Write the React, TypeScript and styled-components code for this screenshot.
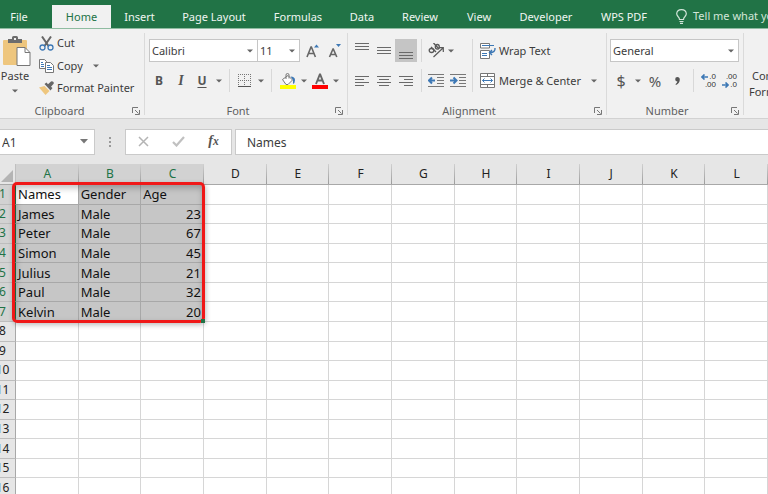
import React from 'react';
import styled, { createGlobalStyle } from 'styled-components';

const GlobalStyle = createGlobalStyle`
  * { box-sizing: border-box; }
  body {
    margin: 0;
    background: #fff;
    color: #3c3c3c;
    font: 11px/16px "Noto Sans", "Open Sans", sans-serif;
  }
  button, input, select { font: inherit; color: inherit; margin: 0; padding: 0; }
`;

const Page = styled.div`
  display: flex;
  flex-direction: column;
  height: 100vh;
  overflow: hidden;
`;

/* ---------- tab strip ---------- */

const TabStrip = styled.nav`
  display: flex;
  align-items: flex-end;
  flex: none;
  height: 29px;
  background: #217346;
  border-bottom: 1px solid #8fbca1;
  overflow: hidden;
`;

const Tab = styled.button<{ $width: number; $active?: boolean }>`
  flex: none;
  width: ${(p) => p.$width}px;
  height: 23px;
  border: 0;
  white-space: nowrap;
  background: ${(p) => (p.$active ? '#f1f1f1' : 'transparent')};
  color: ${(p) => (p.$active ? '#217346' : '#f0f6f2')};
`;

const FileTab = styled(Tab)`
  && { padding-right: 14px; }
`;

const TellMe = styled.button`
  display: flex;
  align-items: center;
  gap: 6px;
  flex: none;
  height: 24px;
  && { margin-left: 14px; }
  border: 0;
  background: transparent;
  && { color: #d3e6da; }
  white-space: nowrap;
`;

/* ---------- ribbon ---------- */

const Ribbon = styled.div`
  display: flex;
  flex: none;
  height: 90px;
  background: #f1f1f1;
  border-bottom: 1px solid #d2d2d2;
  overflow: hidden;
`;

const Group = styled.section<{ $width: number }>`
  display: flex;
  flex-direction: column;
  flex: none;
  width: ${(p) => p.$width}px;
  padding-top: 10px;
  background: linear-gradient(#dadada, #dadada) right 4px / 1px 82px no-repeat;
`;

const GroupFooter = styled.div<{ $shift?: number }>`
  display: flex;
  align-items: center;
  margin-top: auto;
  height: 15px;
  padding-right: 5px;
  color: #5f5f5f;
  & > span {
    flex: 1;
    text-align: center;
    padding-right: ${(p) => p.$shift ?? 0}px;
  }
`;

const Launcher = styled.button`
  display: flex;
  width: 8px;
  height: 8px;
  && { margin-left: 4px; }
  border: 0;
  background: transparent;
`;

const Row = styled.div<{ $indent?: number }>`
  display: flex;
  align-items: center;
  height: 23px;
  padding-left: ${(p) => p.$indent ?? 3}px;
  & + & { margin-top: 7px; }
`;

const Tool = styled.button<{ $width?: number; $height?: number; $on?: boolean; $size?: number }>`
  display: flex;
  align-items: center;
  justify-content: center;
  flex: none;
  width: ${(p) => p.$width ?? 22}px;
  height: ${(p) => p.$height ?? 23}px;
  border: 0;
  background: ${(p) => (p.$on ? '#c5c5c5' : 'transparent')};
  && {
    color: #555;
    font-size: ${(p) => p.$size ?? 12}px;
  }
`;

const BoldTool = styled(Tool)`&& { font-weight: 700; }`;
const ItalicTool = styled(Tool)`
  && {
    font-family: "Liberation Serif", serif;
    font-style: italic;
    font-weight: 700;
  }
`;
const UnderlineTool = styled(Tool)`
  && { font-weight: 700; }
  text-decoration: underline;
  text-underline-offset: 2px;
`;

const Divider = styled.span<{ $width: number; $tall?: boolean }>`
  flex: none;
  align-self: flex-start;
  width: ${(p) => p.$width}px;
  height: ${(p) => (p.$tall ? 30 : 23)}px;
  background: linear-gradient(#d8d8d8, #d8d8d8) center / 1px 100% no-repeat;
`;

const Space = styled.span<{ $width: number }>`
  flex: none;
  width: ${(p) => p.$width}px;
`;

const LabelTool = styled.button<{ $gap?: number }>`
  display: flex;
  align-items: center;
  gap: ${(p) => p.$gap ?? 3}px;
  flex: none;
  height: 22px;
  border: 0;
  background: transparent;
  white-space: nowrap;
`;

const SelectBox = styled.label<{ $width: number }>`
  display: grid;
  grid-template-columns: 1fr 14px;
  align-items: center;
  flex: none;
  width: ${(p) => p.$width}px;
  height: 23px;
  background: #fff;
  border: 1px solid #c6c6c6;
  & + & { border-left: 0; }
  select {
    grid-area: 1 / 1 / 2 / 3;
    appearance: none;
    border: 0;
    outline: 0;
    width: 100%;
    height: 20px;
    padding-left: 2px;
    background: transparent;
  }
  svg { grid-area: 1 / 2; justify-self: center; pointer-events: none; }
`;

const ClipboardBody = styled.div`
  display: flex;
  margin-top: -7px;
`;

const PasteColumn = styled.div`
  display: flex;
  flex-direction: column;
  align-items: center;
  width: 39px;
  padding-right: 9px;
`;

const PasteButton = styled.button`
  display: flex;
  flex-direction: column;
  align-items: center;
  border: 0;
  background: transparent;
  svg { margin: 4px 0 0 3px; }
  span { margin-top: 1px; }
`;

const ClipboardList = styled.div`
  display: flex;
  flex-direction: column;
`;

const CopyLine = styled.div`
  display: flex;
  align-items: center;
`;

const StylesGroup = styled.section`
  flex: none;
  padding: 39px 0 0 5px;
`;

const StylesButton = styled.button`
  width: 68px;
  border: 0;
  background: transparent;
  line-height: 16px;
  text-align: left;
  text-indent: 3px;
`;

/* ---------- formula bar ---------- */

const FormulaBar = styled.div`
  display: flex;
  flex: none;
  align-items: center;
  height: 45px;
  background: #e6e6e6;
  font-size: 12px;
`;

const NameBox = styled.div`
  display: flex;
  align-items: center;
  flex: none;
  width: 95px;
  height: 26px;
  background: #fff;
  border: 1px solid #cacaca;
  border-left: 0;
  input {
    width: 77px;
    height: 24px;
    border: 0;
    outline: 0;
    padding: 2px 0 0 2px;
    background: transparent;
  }
`;

const Dots = styled.span`
  flex: none;
  width: 30px;
  height: 12px;
  background: radial-gradient(#999 1px, transparent 1px) center top / 4px 4px repeat-y;
`;

const EntryTools = styled.div`
  display: flex;
  align-items: center;
  justify-content: space-around;
  flex: none;
  width: 107px;
  height: 26px;
  background: #fff;
  border: 1px solid #cacaca;
`;

const FormulaInput = styled.input`
  flex: 1;
  min-width: 0;
  height: 26px;
  && { margin-left: 3px; padding: 2px 0 0 11px; }
  border: 1px solid #cacaca;
  border-right: 0;
  outline: 0;
  background: #fff;
`;

/* ---------- worksheet ---------- */

const Sheet = styled.main`
  position: relative;
  flex: 1;
  min-height: 0;
  margin-left: -10px;
  overflow: hidden;
`;

const Grid = styled.table`
  width: 100%;
  height: 334px;
  table-layout: fixed;
  border-collapse: separate;
  border-spacing: 0;
  color: #111;
  font-size: 13px;
  line-height: 16px;
  th, td { padding: 0; font-weight: 400; }
`;

const Corner = styled.th`
  width: 26px;
  height: 21px;
  background: #e6e6e6;
  border-right: 1px solid #c0c0c0;
  border-bottom: 1px solid #a8a8a8;
  svg { display: block; margin: 3px 2px 0 auto; }
`;

const ColumnHead = styled.th<{ $selected: boolean }>`
  height: 21px;
  font-size: 12px;
  border-bottom: 1px solid ${(p) => (p.$selected ? '#217346' : '#a8a8a8')};
  background:
    linear-gradient(#d0d0d0, #9c9c9c) right / 1px 100% no-repeat,
    ${(p) => (p.$selected ? '#d2d2d2' : '#e6e6e6')};
  color: ${(p) => (p.$selected ? '#217346' : '#222')};
`;

const RowHead = styled.th<{ $selected: boolean }>`
  font-size: 12px;
  border-right: 1px solid ${(p) => (p.$selected ? '#217346' : '#a8a8a8')};
  border-bottom: 1px solid #bdbdbd;
  background: ${(p) => (p.$selected ? '#d2d2d2' : '#e6e6e6')};
  color: ${(p) => (p.$selected ? '#217346' : '#222')};
`;

const Cell = styled.td<{ $selected: boolean; $active: boolean; $number: boolean }>`
  && { padding: 0 2px; }
  text-align: ${(p) => (p.$number ? 'right' : 'left')};
  border-right: 1px solid ${(p) => (p.$selected ? '#a8a8a8' : '#d6d6d6')};
  border-bottom: 1px solid ${(p) => (p.$selected ? '#a8a8a8' : '#d6d6d6')};
  background: ${(p) => (p.$selected && !p.$active ? '#c6c6c6' : '#fff')};
`;

const Highlight = styled.div`
  position: absolute;
  left: 22px;
  top: 18px;
  width: calc((100% - 26px) / 4 + 5px);
  height: 141px;
  border: 3px solid #f01818;
  border-radius: 5px;
  box-shadow: 1px 2px 5px rgba(0, 0, 0, 0.25), inset 1px 3px 6px rgba(0, 0, 0, 0.25);
  pointer-events: none;
  &::after {
    content: '';
    position: absolute;
    right: -3px;
    bottom: -3px;
    width: 4px;
    height: 4px;
    background: #217346;
  }
`;

/* ---------- icons ---------- */

const Caret = () => (
  <svg width="6" height="4" viewBox="0 0 6 4"><path d="M0 .5h6L3 3.5z" fill="#666" /></svg>
);

const LauncherIcon = () => (
  <svg width="8" height="8" viewBox="0 0 8 8" fill="none" stroke="#777">
    <path d="M.5 6V.5H6M3 3l3.500 3.500M7.500 3v4.500H3" />
  </svg>
);

const PasteIcon = () => (
  <svg width="28" height="31" viewBox="0 0 28 31">
    <rect x="0" y="4" width="24" height="25" rx="1" fill="#eec67e" />
    <path d="M5 7V3h4V1.500q0-1.500 1.500-1.500h3Q15 0 15 1.500V3h4v4z" fill="#6d6d6d" />
    <rect x="11" y="2" width="2" height="2" fill="#f1f1f1" />
    <path d="M14 11.500h8l5 5v13H14z" fill="#fff" stroke="#777" />
    <path d="M22 11.500v5h5" fill="none" stroke="#777" />
  </svg>
);

const CutIcon = () => (
  <svg width="15" height="15" viewBox="0 0 15 15" fill="none">
    <path d="M3 .5L9.500 10M12 .5L5.500 10" stroke="#666" strokeWidth="2" />
    <circle cx="3.500" cy="11.500" r="2.500" stroke="#3d78b5" strokeWidth="1.300" />
    <circle cx="11.500" cy="11.500" r="2.500" stroke="#3d78b5" strokeWidth="1.300" />
  </svg>
);

const CopyIcon = () => (
  <svg width="15" height="14" viewBox="0 0 15 14" stroke="#777" fill="#fff">
    <path d="M.5.5h5l2 2v7h-7z" />
    <path d="M2 3.500h2M2 5.500h3M2 7.500h3" stroke="#3d78b5" />
    <path d="M6.500 3.500h5l3 3v7h-8z" />
    <path d="M8 6.500h3M8 8.500h5M8 10.500h5" stroke="#3d78b5" />
  </svg>
);

const BrushIcon = () => (
  <svg width="15" height="14" viewBox="0 0 15 14">
    <path d="M0 6.500L5.500 5l5 5-4 4z" fill="#eec67e" />
    <path d="M5.500 3l2-1.500L9 3.200 12 .6q1-1 2.200.2t.2 2.200L12 5.700 13.500 7l-2 2.500z" fill="#666" />
  </svg>
);

const GrowIcon = ({ down = false }: { down?: boolean }) => (
  <svg width="14" height="16" viewBox="0 0 14 16" fill="none">
    {down ? (
      <path d="M1.500 14L5 6h.3l3.500 8M3 11.500h4.500" stroke="#666" strokeWidth="1.600" />
    ) : (
      <path d="M1 14L5 4h.4L9.400 14M2.500 10.500h5.500" stroke="#666" strokeWidth="1.600" />
    )}
    <path d={down ? 'M8 1h5l-2.500 3z' : 'M8 4.500h5L10.500 1.500z'} fill="#3d78b5" />
  </svg>
);

const BorderIcon = () => (
  <svg width="13" height="13" viewBox="0 0 13 13" stroke="#777" fill="none">
    <path d="M0 .5h13M.5 0v12M6.500 0v12M12.500 0v12M0 6.500h13" strokeDasharray="1 1" />
    <path d="M0 12.500h13" stroke="#555" />
  </svg>
);

const FillIcon = () => (
  <svg width="16" height="16" viewBox="0 0 16 16">
    <path d="M2.500 6.500L8 2.500l4.500 4.500L8 11.500H6z" fill="#fff" stroke="#777" />
    <path d="M6 6V2Q6 .5 7.500.5T9 2v3.500" fill="none" stroke="#777" />
    <path d="M10.500 3.500q4.500 0 4.500 3.500 0 3-2 4V7z" fill="#3d78b5" />
    <rect y="12" width="16" height="4" fill="#ffff00" />
  </svg>
);

const FontColorIcon = () => (
  <svg width="16" height="16" viewBox="0 0 16 16" fill="none">
    <path d="M4 11L7.800 1.500h.4L12 11M5.300 7.500h5.400" stroke="#666" strokeWidth="1.900" />
    <rect y="12" width="16" height="4" fill="#ff0000" />
  </svg>
);

const LinesIcon = ({ lines, y, step = 3 }: { lines: number[][]; y: number; step?: number }) => (
  <svg width="14" height="20" viewBox="0 0 14 20" stroke="#6a6a6a">
    {lines.map(([from, to], i) => (
      <path key={i} d={`M${from} ${y + i * step + 0.5}H${to}`} />
    ))}
  </svg>
);

const OrientationIcon = () => (
  <svg width="16" height="15" viewBox="0 0 16 15" fill="none" stroke="#5a5a5a">
    <ellipse cx="3.500" cy="7.500" rx="2.300" ry="2" strokeWidth="1.300" />
    <path d="M3 4l5 5M5.500 0l5.500 6" strokeWidth="1.400" />
    <ellipse cx="9.300" cy="3.800" rx="2" ry="2.300" strokeWidth="1.300" />
    <path d="M5.500 14L15 5M15.300 9V4.700H11" strokeWidth="1.200" />
  </svg>
);

const IndentIcon = ({ right = false }: { right?: boolean }) => (
  <svg width="16" height="13" viewBox="0 0 16 13" stroke="#777" fill="none">
    <path d="M0 .5h16M9 3.500h7M9 6.500h7M9 9.500h7M0 12.500h16" />
    <path
      d={right ? 'M0 6.500h6.500M3.500 3.500l3 3-3 3' : 'M7 6.500H1M4 3.500l-3 3 3 3'}
      stroke="#3d78b5"
      strokeWidth="2"
    />
  </svg>
);

const WrapIcon = () => (
  <svg width="16" height="16" viewBox="0 0 16 16" fill="none" stroke="#777">
    <path d="M.5 5V.5h9V5z M.5 15.500v-8h9v8z" fill="#fff" />
    <path d="M2 2.500h12M2 10.500h5M2 12.500h5" stroke="#3d78b5" />
    <path d="M15 5q.5 4.500-5 4.500M12 7L9.500 9.500 12 12" stroke="#3d78b5" strokeWidth="1.400" />
  </svg>
);

const MergeIcon = () => (
  <svg width="15" height="15" viewBox="0 0 15 15" fill="none" stroke="#777">
    <path d="M.5.5h14v14H.5zM.5 3.500h14M.5 11.500h14M7.500 0v3.500M7.500 11.500V15" fill="#fff" />
    <path d="M2.500 7.500h10M4.500 5.500l-2 2 2 2M10.500 5.500l2 2-2 2" stroke="#3d78b5" />
  </svg>
);

const BulbIcon = () => (
  <svg width="11" height="15" viewBox="0 0 11 15" fill="none" stroke="#d3e6da">
    <path d="M3.500 10.500q0-1.500-1.500-3Q.7 6 .7 4.800.9.7 5.500.7t4.800 4.100q0 1.200-1.300 2.700-1.500 1.500-1.500 3zM3.500 12.500h4M4 14.300h3" strokeWidth="1.200" />
  </svg>
);

const CommaIcon = () => (
  <svg width="5" height="8" viewBox="0 0 5 8">
    <path d="M2.300 0Q4.800 0 4.800 2.500 4.800 6 1 8l-.5-.8Q2.300 6 2.400 4.600.2 4.500.2 2.300.2 0 2.300 0z" fill="#555" />
  </svg>
);

const DecimalStack = styled.span`
  display: flex;
  flex-direction: column;
  width: 16px;
  color: #333;
  font: 8px/8px "Liberation Sans", sans-serif;
  span { display: flex; align-items: center; justify-content: flex-end; gap: 1px; }
`;

const SmallArrow = ({ right = false }: { right?: boolean }) => (
  <svg width="7" height="6" viewBox="0 0 7 6" fill="none" stroke="#3d78b5" strokeWidth="1.600">
    <path d={right ? 'M0 3h6M3.500.5L6 3 3.500 5.500' : 'M7 3H1M3.500.5L1 3l2.500 2.500'} />
  </svg>
);

/* ---------- data ---------- */

const tabs: [string, number, boolean?][] = [
  ['Home', 59, true],
  ['Insert', 57],
  ['Page Layout', 92],
  ['Formulas', 76],
  ['Data', 52],
  ['Review', 64],
  ['View', 54],
  ['Developer', 80],
  ['WPS PDF', 76],
];

const columns = 'ABCDEFGHIJKL'.split('');

const people: string[][] = [
  ['Names', 'Gender', 'Age'],
  ['James', 'Male', '23'],
  ['Peter', 'Male', '67'],
  ['Simon', 'Male', '45'],
  ['Julius', 'Male', '21'],
  ['Paul', 'Male', '32'],
  ['Kelvin', 'Male', '20'],
];

const rowNumbers = Array.from({ length: 16 }, (_, i) => i + 1);

const left = [[0, 14], [0, 9], [0, 14], [0, 9]];
const center = [[0, 14], [2, 12], [0, 14], [2, 12]];
const right = [[0, 14], [5, 14], [0, 14], [5, 14]];
const full = [[0, 14], [0, 14], [0, 14]];

const Select = ({ label, value, width }: { label: string; value: string; width: number }) => (
  <SelectBox $width={width}>
    <select aria-label={label} defaultValue={value}>
      <option>{value}</option>
    </select>
    <Caret />
  </SelectBox>
);

const Footer = ({ title, shift }: { title: string; shift?: number }) => (
  <GroupFooter $shift={shift}>
    <span>{title}</span>
    <Launcher aria-label={`${title} settings`}><LauncherIcon /></Launcher>
  </GroupFooter>
);

const Drop = ({ label, width = 8, height }: { label: string; width?: number; height?: number }) => (
  <Tool $width={width} $height={height} aria-label={label}><Caret /></Tool>
);

export default function App() {
  return (
    <Page>
      <GlobalStyle />
      <TabStrip>
        <FileTab $width={52}>File</FileTab>
        {tabs.map(([name, width, active]) => (
          <Tab key={name} $width={width} $active={active}>{name}</Tab>
        ))}
        <TellMe><BulbIcon />Tell me what you want to do</TellMe>
      </TabStrip>

      <Ribbon>
        <Group $width={145}>
          <ClipboardBody>
            <PasteColumn>
              <PasteButton><PasteIcon /><span>Paste</span></PasteButton>
              <Drop label="Paste options" width={14} height={14} />
            </PasteColumn>
            <ClipboardList>
              <LabelTool><CutIcon />Cut</LabelTool>
              <CopyLine>
                <LabelTool><CopyIcon />Copy</LabelTool>
                <Space $width={9} />
                <Drop label="Copy options" />
              </CopyLine>
              <LabelTool><BrushIcon />Format Painter</LabelTool>
            </ClipboardList>
          </ClipboardBody>
          <Footer title="Clipboard" shift={9} />
        </Group>

        <Group $width={203}>
          <Row $indent={4}>
            <Select label="Font" value="Calibri" width={109} />
            <Select label="Font size" value="11" width={42} />
            <Space $width={2} />
            <Tool aria-label="Increase font size"><GrowIcon /></Tool>
            <Tool aria-label="Decrease font size"><GrowIcon down /></Tool>
          </Row>
          <Row>
            <BoldTool>B</BoldTool>
            <ItalicTool $size={14}>I</ItalicTool>
            <UnderlineTool $width={20}>U</UnderlineTool>
            <Drop label="Underline options" width={14} />
            <Divider $width={6} />
            <Tool $width={24} aria-label="Borders"><BorderIcon /></Tool>
            <Drop label="Border options" width={10} />
            <Divider $width={10} />
            <Tool $width={24} aria-label="Fill color"><FillIcon /></Tool>
            <Drop label="Fill options" />
            <Tool $width={24} aria-label="Font color"><FontColorIcon /></Tool>
            <Drop label="Font color options" />
          </Row>
          <Footer title="Font" />
        </Group>

        <Group $width={259}>
          <Row>
            <Tool aria-label="Top align"><LinesIcon lines={full} y={2} /></Tool>
            <Tool aria-label="Middle align"><LinesIcon lines={full} y={6} /></Tool>
            <Tool $on aria-label="Bottom align"><LinesIcon lines={full} y={11} /></Tool>
            <Divider $width={8} />
            <Tool aria-label="Orientation"><OrientationIcon /></Tool>
            <Drop label="Orientation options" />
            <Space $width={14} />
            <Divider $width={6} $tall />
            <Space $width={5} />
            <LabelTool><WrapIcon />Wrap Text</LabelTool>
          </Row>
          <Row>
            <Tool aria-label="Align left"><LinesIcon lines={left} y={5} /></Tool>
            <Tool aria-label="Center"><LinesIcon lines={center} y={5} /></Tool>
            <Tool aria-label="Align right"><LinesIcon lines={right} y={5} /></Tool>
            <Divider $width={8} />
            <Tool aria-label="Decrease indent"><IndentIcon /></Tool>
            <Tool aria-label="Increase indent"><IndentIcon right /></Tool>
            <Divider $width={6} />
            <Space $width={5} />
            <LabelTool $gap={4}><MergeIcon />Merge &amp; Center</LabelTool>
            <Space $width={9} />
            <Drop label="Merge options" />
          </Row>
          <Footer title="Alignment" />
        </Group>

        <Group $width={137}>
          <Row>
            <Select label="Number format" value="General" width={129} />
          </Row>
          <Row>
            <Tool $size={16} aria-label="Currency">$</Tool>
            <Drop label="Currency options" width={12} />
            <Tool $size={15} aria-label="Percent">%</Tool>
            <Tool aria-label="Comma style"><CommaIcon /></Tool>
            <Divider $width={10} />
            <Tool $width={20} aria-label="Increase decimal">
              <DecimalStack><span><SmallArrow />.0</span><span>.00</span></DecimalStack>
            </Tool>
            <Tool aria-label="Decrease decimal">
              <DecimalStack><span>.00</span><span><SmallArrow right />.0</span></DecimalStack>
            </Tool>
          </Row>
          <Footer title="Number" />
        </Group>

        <StylesGroup>
          <StylesButton>Conditional Formatting</StylesButton>
        </StylesGroup>
      </Ribbon>

      <FormulaBar>
        <NameBox>
          <input aria-label="Name box" defaultValue="A1" />
          <Tool $width={14} aria-label="Named ranges">
            <svg width="8" height="5" viewBox="0 0 8 5"><path d="M0 0h8L4 4.500z" fill="#777" /></svg>
          </Tool>
        </NameBox>
        <Dots />
        <EntryTools>
          <Tool aria-label="Cancel">
            <svg width="11" height="11" viewBox="0 0 11 11"><path d="M1 1l9 9M10 1l-9 9" stroke="#b4b4b4" strokeWidth="1.500" /></svg>
          </Tool>
          <Tool aria-label="Enter">
            <svg width="13" height="11" viewBox="0 0 13 11"><path d="M1 6l3.500 3.500L12 1" fill="none" stroke="#c0c0c0" strokeWidth="2.200" /></svg>
          </Tool>
          <ItalicTool $size={14} aria-label="Insert function">
            <span>f<small>x</small></span>
          </ItalicTool>
        </EntryTools>
        <FormulaInput aria-label="Formula" defaultValue="Names" />
      </FormulaBar>

      <Sheet>
        <Grid>
          <thead>
            <tr>
              <Corner aria-label="Select all">
                <svg width="12" height="12" viewBox="0 0 12 12"><path d="M12 0v12H0z" fill="#b4b4b4" /></svg>
              </Corner>
              {columns.map((c, i) => <ColumnHead key={c} $selected={i < 3}>{c}</ColumnHead>)}
            </tr>
          </thead>
          <tbody>
            {rowNumbers.map((n, r) => (
              <tr key={n}>
                <RowHead scope="row" $selected={r < 7}>{n}</RowHead>
                {columns.map((c, i) => (
                  <Cell
                    key={c}
                    $selected={r < 7 && i < 3}
                    $active={r === 0 && i === 0}
                    $number={r > 0 && i === 2}
                  >
                    {people[r]?.[i]}
                  </Cell>
                ))}
              </tr>
            ))}
          </tbody>
        </Grid>
        <Highlight />
      </Sheet>
    </Page>
  );
}
